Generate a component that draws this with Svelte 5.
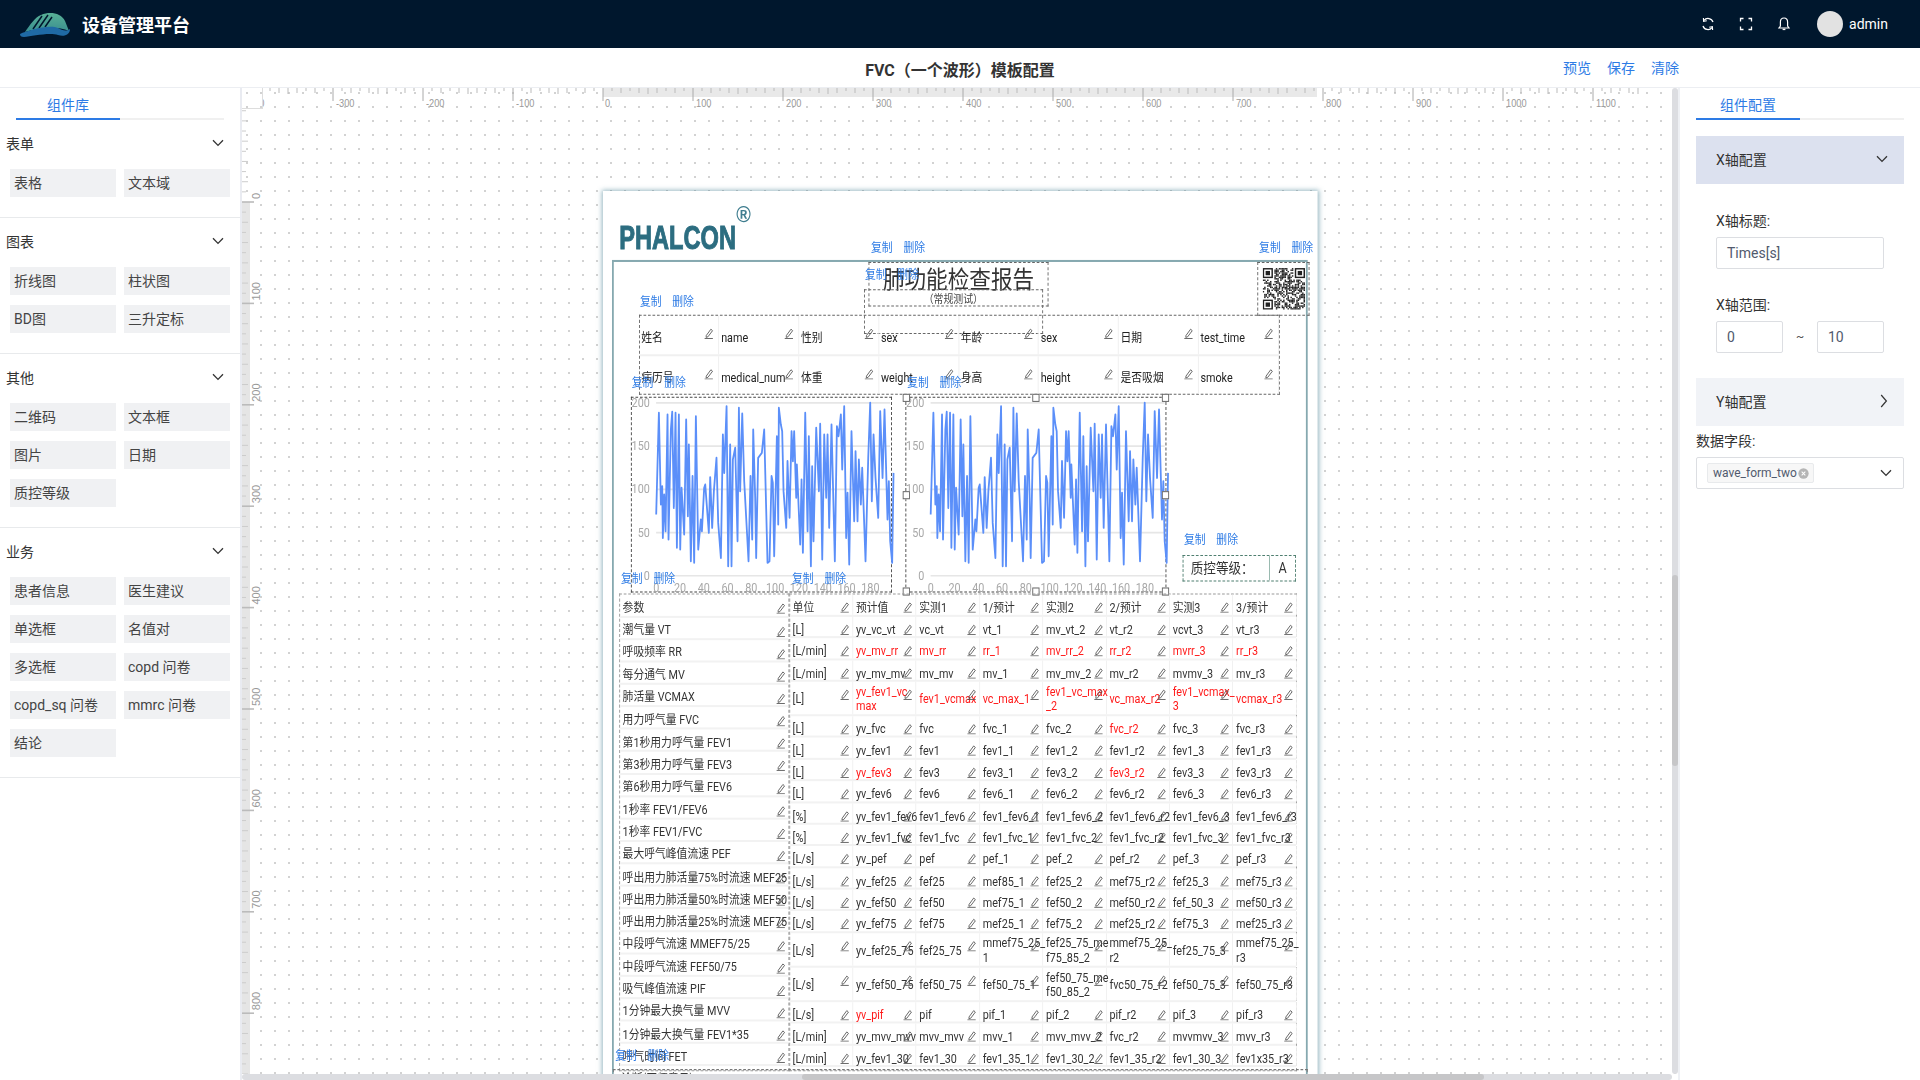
<script>
  const sections = [
    { name: '表单', items: ['表格', '文本域'] },
    { name: '图表', items: ['折线图', '柱状图', 'BD图', '三升定标'] },
    { name: '其他', items: ['二维码', '文本框', '图片', '日期', '质控等级'] },
    { name: '业务', items: ['患者信息', '医生建议', '单选框', '名值对', '多选框', 'copd 问卷', 'copd_sq 问卷', 'mmrc 问卷', '结论'] }
  ];

  // ruler
  const hTicks = [];
  for (let i = -40; i <= 115; i++) {
    const x = 603 - 263 + i * 9;
    if (x < 0) continue;
    hTicks.push({ x, h: i % 10 === 0 ? 13 : i % 5 === 0 ? 6 : i % 2 === 0 ? 5 : 3, long: i % 10 === 0 });
  }
  const hLabels = [];
  for (let n = -400; n <= 1100; n += 100) hLabels.push({ n, x: 340 + n * 0.9 + (n === 0 ? 2 : 3) });
  const vTicks = [];
  for (let i = -9; i <= 86; i++) {
    const y = 202 - 88 + i * 10.14;
    vTicks.push({ y, w: i % 10 === 0 ? 12 : i % 2 === 0 ? 6 : 4, long: i % 10 === 0 });
  }
  const vLabels = [0, 100, 200, 300, 400, 500, 600, 700, 800].map((n) => ({ n, y: 202 - 88 + n * 1.014 - 3 }));

  // chart
  const trace = [18,350,26,45,32,320,36,265,38,420,42,290,46,400,52,50,55,425,62,95,66,42,71,330,76,45,80,450,86,50,90,455,94,270,102,410,108,65,113,355,116,140,122,490,127,235,132,495,137,55,144,455,152,365,155,400,162,270,165,260,176,405,180,238,186,390,191,280,199,180,204,375,212,480,218,110,222,225,229,25,234,505,240,140,244,505,248,185,255,150,262,430,266,30,270,280,276,47,282,250,295,490,301,235,306,425,309,95,315,300,318,480,324,180,335,165,342,95,352,495,358,490,364,235,368,255,372,475,380,115,384,380,386,30,392,80,396,100,400,280,408,390,412,190,418,360,424,100,428,190,432,100,438,300,440,200,450,440,454,245,458,465,465,45,472,400,476,115,482,505,486,205,490,430,498,90,506,280,510,78,516,485,522,110,528,300,532,110,537,390,544,80,554,490,560,85,565,115,572,50,576,215,582,25,588,420,592,285,597,500,604,100,612,370,616,160,622,370,626,185,632,320,636,210,646,490,654,180,660,15,665,310,670,110,676,240,684,360,690,40,697,240,703,35,712,365,716,250,720,430,726,495,730,225];
  let pts = [];
  for (let i = 0; i < trace.length; i += 2) {
    const X = 650 + trace[i] / 3;
    const Y = 398 + trace[i + 1] / 3;
    pts.push(((X - 630.7) / 0.9).toFixed(1) + ',' + ((Y - 397) / 1.014).toFixed(1));
  }
  const points = pts.join(' ');
  const yAxis = [200, 150, 100, 50, 0].map((n) => ({ n, y: 176.5 - n * 0.853 }));
  const xAxis = [0, 20, 40, 60, 80, 100, 120, 140, 160, 180].map((n) => ({ n, x: 28.1 + n * 1.322 }));
  const handles = [[0, 0], [50, 0], [100, 0], [0, 50], [100, 50], [0, 100], [50, 100], [100, 100]];

  // QR
  const qrN = 29;
  const qr = [];
  let seed = 20240;
  const rnd = () => ((seed = (seed * 9301 + 49297) % 233280) / 233280);
  const inFinder = (x, y, ox, oy) => x >= ox - 1 && x <= ox + 7 && y >= oy - 1 && y <= oy + 7;
  for (let y = 0; y < qrN; y++) for (let x = 0; x < qrN; x++) {
    const f = [[0, 0], [22, 0], [0, 22]].some(([a, b]) => inFinder(x, y, a, b));
    if (!f && rnd() > 0.46) qr.push([x, y]);
  }
  const finders = [[0, 0], [22, 0], [0, 22]];

  // info table
  const info = [
    ['姓名', 'name', '性别', 'sex', '年龄', 'sex', '日期', 'test_time'],
    ['病历号', 'medical_num', '体重', 'weight', '身高', 'height', '是否吸烟', 'smoke']
  ];

  const leftRows = ['参数', '潮气量 VT', '呼吸频率 RR', '每分通气 MV', '肺活量 VCMAX', '用力呼气量 FVC', '第1秒用力呼气量 FEV1', '第3秒用力呼气量 FEV3', '第6秒用力呼气量 FEV6', '1秒率 FEV1/FEV6', '1秒率 FEV1/FVC', '最大呼气峰值流速 PEF', '呼出用力肺活量75%时流速 MEF25', '呼出用力肺活量50%时流速 MEF50', '呼出用力肺活量25%时流速 MEF75', '中段呼气流速 MMEF75/25', '中段呼气流速 FEF50/75', '吸气峰值流速 PIF', '1分钟最大换气量 MVV', '1分钟最大换气量 FEV1*35', '呼气时间 FET'];

  const R = (s) => '!' + s;
  const rightRows = [
    ['单位', '预计值', '实测1', '1/预计', '实测2', '2/预计', '实测3', '3/预计'],
    ['[L]', 'yv_vc_vt', 'vc_vt', 'vt_1', 'mv_vt_2', 'vt_r2', 'vcvt_3', 'vt_r3'],
    ['[L/min]', R('yv_mv_rr'), R('mv_rr'), R('rr_1'), R('mv_rr_2'), R('rr_r2'), R('mvrr_3'), R('rr_r3')],
    ['[L/min]', 'yv_mv_mv', 'mv_mv', 'mv_1', 'mv_mv_2', 'mv_r2', 'mvmv_3', 'mv_r3'],
    ['[L]', R('yv_fev1_vc\nmax'), R('fev1_vcmax'), R('vc_max_1'), R('fev1_vc_max\n_2'), R('vc_max_r2'), R('fev1_vcmax_\n3'), R('vcmax_r3')],
    ['[L]', 'yv_fvc', 'fvc', 'fvc_1', 'fvc_2', R('fvc_r2'), 'fvc_3', 'fvc_r3'],
    ['[L]', 'yv_fev1', 'fev1', 'fev1_1', 'fev1_2', 'fev1_r2', 'fev1_3', 'fev1_r3'],
    ['[L]', R('yv_fev3'), 'fev3', 'fev3_1', 'fev3_2', R('fev3_r2'), 'fev3_3', 'fev3_r3'],
    ['[L]', 'yv_fev6', 'fev6', 'fev6_1', 'fev6_2', 'fev6_r2', 'fev6_3', 'fev6_r3'],
    ['[%]', 'yv_fev1_fev6', 'fev1_fev6', 'fev1_fev6_1', 'fev1_fev6_2', 'fev1_fev6_r2', 'fev1_fev6_3', 'fev1_fev6_r3'],
    ['[%]', 'yv_fev1_fvc', 'fev1_fvc', 'fev1_fvc_1', 'fev1_fvc_2', 'fev1_fvc_r2', 'fev1_fvc_3', 'fev1_fvc_r3'],
    ['[L/s]', 'yv_pef', 'pef', 'pef_1', 'pef_2', 'pef_r2', 'pef_3', 'pef_r3'],
    ['[L/s]', 'yv_fef25', 'fef25', 'mef85_1', 'fef25_2', 'mef75_r2', 'fef25_3', 'mef75_r3'],
    ['[L/s]', 'yv_fef50', 'fef50', 'mef75_1', 'fef50_2', 'mef50_r2', 'fef_50_3', 'mef50_r3'],
    ['[L/s]', 'yv_fef75', 'fef75', 'mef25_1', 'fef75_2', 'mef25_r2', 'fef75_3', 'mef25_r3'],
    ['[L/s]', 'yv_fef25_75', 'fef25_75', 'mmef75_25_\n1', 'fef25_75_me\nf75_85_2', 'mmef75_25_\nr2', 'fef25_75_3', 'mmef75_25_\nr3'],
    ['[L/s]', 'yv_fef50_75', 'fef50_75', 'fef50_75_1', 'fef50_75_me\nf50_85_2', 'fvc50_75_r2', 'fef50_75_3', 'fef50_75_r3'],
    ['[L/s]', R('yv_pif'), 'pif', 'pif_1', 'pif_2', 'pif_r2', 'pif_3', 'pif_r3'],
    ['[L/min]', 'yv_mvv_mvv', 'mvv_mvv', 'mvv_1', 'mvv_mvv_2', 'fvc_r2', 'mvvmvv_3', 'mvv_r3'],
    ['[L/min]', 'yv_fev1_30', 'fev1_30', 'fev1_35_1', 'fev1_30_2', 'fev1_35_r2', 'fev1_30_3', 'fev1x35_r3']
  ];
  const isDouble = (r) => r.some((c) => c.includes('\n'));

  const actions = [
    [297.8, 48], [291, 75], [729, 48], [41, 100.5], [32, 181.3], [338, 181.3], [645.5, 336], [20, 374.6], [210, 374.6], [13.5, 845]
  ];
</script>

{#snippet pen()}
  <svg class="pen" viewBox="0 0 12 12" width="11" height="11" aria-hidden="true">
    <path d="M3 8.2 8.6 1.4 10.6 3 5 9.6 2.8 10.2Z" fill="none" stroke="#555" stroke-width="1" />
    <path d="M1 11.4H11" stroke="#555" stroke-width="1" />
  </svg>
{/snippet}

{#snippet chevron(cls)}
  <svg class={cls} viewBox="0 0 12 8" width="12" height="8" aria-hidden="true"><path d="M1 1.2 6 6.4 11 1.2" fill="none" stroke="#333" stroke-width="1.3" /></svg>
{/snippet}

{#snippet tabs(label)}
  <div class="tabs"><div class="tab">{label}</div></div>
{/snippet}

{#snippet chart(selected)}
  <svg class="plot" viewBox="0 0 290 193" width="290" height="193" aria-hidden="true">
    {#each yAxis as t}
      <line x1="28" x2="288" y1={t.y} y2={t.y} stroke="#e6e6e6" stroke-width="1.6" />
      <text class="axis" x="21" y={t.y + 4} text-anchor="end">{t.n}</text>
    {/each}
    {#each xAxis as t}
      <text class="axis" x={t.x} y="192" text-anchor="middle">{t.n}</text>
    {/each}
    <polyline {points} fill="none" stroke="#5b8ff9" stroke-width="2" stroke-linejoin="round" />
  </svg>
  {#if selected}
    {#each handles as h}
      <span class="handle" style="left:{h[0]}%;top:{h[1]}%"></span>
    {/each}
  {/if}
{/snippet}

<div class="page">
  <header class="topbar">
    <div class="brand">
      <svg class="logo" viewBox="0 0 50 25" width="50" height="25" aria-hidden="true">
        <defs>
          <linearGradient id="lg" x1="0" y1="0" x2="0" y2="1"><stop offset="0" stop-color="#58b096" /><stop offset="1" stop-color="#3a8f90" /></linearGradient>
        </defs>
        <path d="M5 20C10 13 15 5 21 3 30-1 41 1 45 9L49 19C38 14 20 15 5 20Z" fill="url(#lg)" />
        <path d="M13 17 22 4M19 16 28 3M25 15 32 5" stroke="#00172d" stroke-width="1.5" fill="none" />
        <path d="M0 22C8 18 30 12 38 16 42 18 46 20 50 17 50 23 44 25 38 23 30 20 12 24 4 25 1 25 0 24 0 22Z" fill="#1f6aa5" />
      </svg>
      <span class="brand-name">设备管理平台</span>
    </div>
    <div class="top-right">
      <svg viewBox="0 0 14 14" width="14" height="14" aria-hidden="true"><path d="M12 5A5.2 5.2 0 0 0 3 3.4M2 9A5.2 5.2 0 0 0 11 10.6" fill="none" stroke="#fff" stroke-width="1.3" /><path d="M2.4 1 2.6 4.4 5.8 3.8M11.6 13 11.4 9.6 8.2 10.2" fill="none" stroke="#fff" stroke-width="1.1" /></svg>
      <svg viewBox="0 0 14 14" width="14" height="14" aria-hidden="true"><path d="M1.5 4.5V1.5H4.5M9.5 1.5H12.5V4.5M12.5 9.5V12.5H9.5M4.5 12.5H1.5V9.5" fill="none" stroke="#fff" stroke-width="1.3" /></svg>
      <svg viewBox="0 0 14 14" width="14" height="14" aria-hidden="true"><path d="M7 1C4.6 1 3.4 3 3.4 5V9L2 11H12L10.6 9V5C10.6 3 9.4 1 7 1Z" fill="none" stroke="#fff" stroke-width="1.2" /><path d="M5.6 12.4H8.4" stroke="#fff" stroke-width="1.4" /></svg>
      <div class="user"><span class="avatar"></span><span class="uname">admin</span></div>
    </div>
  </header>

  <div class="toolbar">
    <span></span>
    <div class="page-title">FVC（一个波形）模板配置</div>
    <div class="links"><span>预览</span><span>保存</span><span>清除</span></div>
  </div>

  <div class="main">
    <aside class="left">
      {@render tabs('组件库')}
      {#each sections as s}
        <section class="group">
          <div class="group-head"><span>{s.name}</span>{@render chevron('chev')}</div>
          <div class="grid">
            {#each s.items as it}<div class="comp">{it}</div>{/each}
          </div>
        </section>
      {/each}
    </aside>

    <div class="canvas">
      <div class="paper">
        <div class="logo-text">PHALCON</div>
        <div class="reg">®</div>
        <div class="frame"></div>

        <div class="box title-box"><div class="report-title">肺功能检查报告</div></div>
        <div class="box sub-box"><div class="report-sub">（常规测试）</div></div>
        <div class="box qr-box">
          <svg class="qr" viewBox="0 0 29 29" preserveAspectRatio="none" aria-hidden="true">
            {#each qr as m}<rect x={m[0]} y={m[1]} width="1" height="1" fill="#222" />{/each}
            {#each finders as f}
              <rect x={f[0]} y={f[1]} width="7" height="7" fill="#222" />
              <rect x={f[0] + 1} y={f[1] + 1} width="5" height="5" fill="#fff" />
              <rect x={f[0] + 2} y={f[1] + 2} width="3" height="3" fill="#222" />
            {/each}
          </svg>
        </div>

        <div class="box info">
          {#each info as row}
            <div class="info-row">
              {#each row as c}
                <div class="info-cell"><span>{c}</span>{@render pen()}</div>
              {/each}
            </div>
          {/each}
        </div>

        <div class="box chart c1">{@render chart(false)}</div>
        <div class="box chart c2">{@render chart(true)}</div>

        <div class="quality"><span class="q-label">质控等级：</span><span class="q-val">A</span></div>

        <div class="box tbl-left">
          {#each leftRows as l}
            <div class="l-row"><span>{l}</span>{@render pen()}</div>
          {/each}
        </div>

        <div class="box tbl-right">
          {#each rightRows as r}
            <div class="r-row" class:double={isDouble(r)}>
              {#each r as c}
                <div class="r-cell" class:red={c.startsWith('!')}><span>{c.replace('!', '')}</span>{@render pen()}</div>
              {/each}
            </div>
          {/each}
        </div>

        <div class="box advice"><span>诊断(医师意见)</span></div>

        {#each actions as a}
          <div class="actions" style="left:{a[0]}px;top:{a[1]}px"><span>复制</span><span>删除</span></div>
        {/each}
      </div>

      <svg class="ruler-h" width="1409" height="22" aria-hidden="true">
        <rect x="340" y="0" width="714" height="9" fill="#e9e9e9" />
        {#each hTicks as t}
          <line x1={t.x} x2={t.x} y1="0" y2={t.h} stroke={t.long ? '#aaa' : '#bbb'} stroke-width="1" />
        {/each}
        {#each hLabels as l}
          <text class="rl" transform="translate({l.x},19) scale(.84,1)">{l.n}</text>
        {/each}
      </svg>
      <svg class="ruler-v" width="22" height="986" aria-hidden="true">
        <rect x="0" y="114" width="8" height="872" fill="#e5e5e5" />
        {#each vTicks as t}
          {#if t.y > 21}
            <line x1="0" x2={t.w} y1={t.y} y2={t.y} stroke={t.long ? '#bbb' : '#ccc'} stroke-width={t.long ? 1.6 : 1} />
          {/if}
        {/each}
        {#each vLabels as l}
          <text class="rl" transform="translate(18,{l.y}) rotate(-90)">{l.n}</text>
        {/each}
      </svg>
      <div class="corner"></div>

      <div class="sb-v"><span></span></div>
      <div class="sb-h"><span></span></div>
    </div>

    <aside class="right">
      {@render tabs('组件配置')}
      <div class="coll active"><span>X轴配置</span>{@render chevron('chev-sm')}</div>
      <div class="coll-body">
        <div class="lab">X轴标题:</div>
        <div class="input">Times[s]</div>
        <div class="lab second">X轴范围:</div>
        <div class="range">
          <div class="input">0</div>
          <span class="tilde">~</span>
          <div class="input">10</div>
        </div>
      </div>
      <div class="coll">
        <span>Y轴配置</span>
        <svg viewBox="0 0 8 14" width="8" height="14" aria-hidden="true"><path d="M1.2 1 6.4 7 1.2 13" fill="none" stroke="#333" stroke-width="1.2" /></svg>
      </div>
      <div class="field-lab">数据字段:</div>
      <div class="select">
        <span class="tag">wave_form_two
          <svg viewBox="0 0 12 12" width="11" height="11" aria-hidden="true"><circle cx="6" cy="6" r="5.6" fill="#b5b5b5" /><path d="M4 4 8 8M8 4 4 8" stroke="#fff" stroke-width="1.1" /></svg>
        </span>
        {@render chevron('chev-sel')}
      </div>
    </aside>
  </div>
</div>

<style>
  :global(body) { margin: 0; background: #fff; }
  .page {
    width: 1920px; height: 1080px; overflow: hidden; display: flex; flex-direction: column;
    font-family: Roboto, "Noto Sans CJK SC", sans-serif; color: #4a4f5c; font-size: 14px;
  }
  .topbar {
    height: 48px; flex: none; background: #00172d; display: flex; align-items: center;
    justify-content: space-between; padding: 0 32px 0 20px; color: #fff;
  }
  .brand { display: flex; align-items: center; gap: 12px; }
  .logo { display: block; }
  .brand-name { font-size: 18px; font-weight: 700; }
  .top-right { display: flex; align-items: center; gap: 24px; }
  .top-right > svg { display: block; }
  .user { display: flex; align-items: center; gap: 6px; margin-left: 2px; }
  .avatar { width: 26px; height: 26px; border-radius: 50%; background: #e2e2e2; }
  .uname { font-size: 14px; }

  .toolbar {
    height: 40px; flex: none; box-sizing: border-box; display: grid; grid-template-columns: 1fr auto 1fr;
    align-items: center; border-bottom: 1px solid #eceef2;
  }
  .page-title { font-size: 16px; font-weight: 700; color: #333; padding-top: 2px; }
  .links { display: flex; gap: 16px; justify-content: flex-end; padding: 0 241px 2px 0; color: #2d7be5; font-size: 14px; }

  .main { flex: 1; display: flex; min-height: 0; }
  .left { width: 240px; flex: none; overflow: hidden; }
  .right { width: 240px; flex: none; box-sizing: border-box; padding: 0 16px; }

  .tabs { height: 32px; box-sizing: border-box; border-bottom: 2px solid #f0f0f0; margin: 0 16px; }
  .right .tabs { margin: 0; }
  .tab {
    width: 104px; height: 32px; box-sizing: border-box; border-bottom: 2px solid #2d7be5; color: #2d7be5;
    text-align: center; font-size: 14px; line-height: 34px;
  }
  .group { border-bottom: 1px solid #e8eaec; padding-bottom: 20px; }
  .group-head { height: 49px; box-sizing: border-box; padding: 0 16px 4px 6px; display: flex; align-items: center; justify-content: space-between; color: #333; }
  .chev { margin-right: 0; }
  .grid { display: grid; grid-template-columns: 106px 106px; gap: 10px 8px; padding: 0 10px; }
  .comp { height: 28px; background: #f0f1f3; line-height: 28px; padding-left: 4px; color: #444; white-space: nowrap; }

  .canvas {
    flex: 1; position: relative; overflow: hidden; box-sizing: border-box;
    border-left: 2px solid #e9ebf1; border-right: 2px solid #eef0f4;
    background-color: #fff;
    background-image: radial-gradient(circle, #d2d2d2 0.9px, transparent 1.2px);
    background-size: 14px 14px;
    background-position: -2px -2px;
  }
  .ruler-h { position: absolute; left: 21px; top: 0; display: block; }
  .ruler-v { position: absolute; left: 0; top: 0; display: block; }
  .rl { font: 11px "Liberation Sans", sans-serif; fill: #999; }
  .corner { position: absolute; left: 0; top: 0; width: 20px; height: 20px; border-right: 1px solid #ddd; border-bottom: 1px solid #ddd; }
  .sb-v { position: absolute; right: 0; top: 0; bottom: 6px; width: 6px; background: #dcdde1; border-radius: 3px; }
  .sb-v span { position: absolute; left: 0; right: 0; top: 487px; height: 191px; background: #c6c6c8; border-radius: 3px; }
  .sb-h { position: absolute; left: 0; right: 6px; bottom: 0; height: 6px; background: #dcdde1; border-radius: 3px; }
  .sb-h span { position: absolute; top: 0; bottom: 0; left: 560px; width: 682px; background: #c6c6c8; border-radius: 3px; }

  .paper {
    position: absolute; left: 361px; top: 103px; width: 794px; height: 1123px; background: #fff;
    transform-origin: 0 0; transform: scale(0.9, 1.014);
    box-shadow: 0 0 5px 1px rgba(60, 120, 140, 0.55);
    font-size: 12px; color: #3a3a3a; line-height: 14px;
  }
  .logo-text {
    position: absolute; left: 18px; top: 29px; font: 700 32px/34px "Liberation Sans", sans-serif; color: #2c6d80;
    transform-origin: 0 0; transform: scaleX(0.82); filter: blur(0.5px);
    -webkit-text-stroke: 1px #2c6d80;
  }
  .reg { position: absolute; left: 148px; top: 12px; font: 700 22px/24px "Liberation Sans", sans-serif; color: #3f7d8f; filter: blur(0.4px); }
  .frame { position: absolute; left: 10px; top: 68px; width: 773px; height: 1040px; box-sizing: border-box; border: 2px solid #86a9b0; }
  .box { position: absolute; box-sizing: border-box; border: 1px dashed #666; }

  .title-box { left: 295px; top: 70px; width: 200px; height: 44px; }
  .report-title { font-size: 24px; line-height: 34px; text-align: center; color: #333; }
  .sub-box { left: 289.5px; top: 97px; width: 199.5px; height: 44px; }
  .report-sub { font-size: 11px; line-height: 18px; text-align: center; color: #444; }
  .qr-box { left: 727px; top: 70px; width: 58px; height: 53px; }
  .qr { position: absolute; left: 5px; top: 5px; width: 47px; height: 41px; filter: blur(0.25px); }

  .info { left: 39.5px; top: 122px; width: 712px; height: 79px; display: flex; flex-direction: column; }
  .info-row { flex: 1; display: flex; border-bottom: 2px solid #f0f0f0; }
  .info-row:last-child { border-bottom: 0; }
  .info-cell { flex: 1; position: relative; display: flex; align-items: center; padding: 6px 0 0 2px; border-right: 1px solid #eee; white-space: nowrap; color: #222; }
  .info-cell .pen { position: absolute; right: 5px; top: 12px; }

  .chart { border-color: #444; }
  .c1 { left: 30.8px; top: 203.2px; width: 290px; height: 193.3px; }
  .c2 { left: 336.3px; top: 203.2px; width: 290px; height: 193.3px; }
  .plot { position: absolute; left: -1px; top: -1px; overflow: visible; display: block; }
  .axis { font: 12px Roboto, sans-serif; fill: #a8a8a8; }
  .handle {
    position: absolute; width: 8px; height: 8px; margin: -4px 0 0 -4px; box-sizing: border-box;
    background: #fff; border: 1px solid #666;
  }

  .quality {
    position: absolute; left: 644px; top: 359px; width: 126px; height: 25.6px; box-sizing: border-box;
    border: 1px dashed #4f7f70; display: flex; align-items: center; color: #333; font-size: 14px;
  }
  .q-label { width: 96px; padding-left: 8px; box-sizing: border-box; border-right: 1px solid #8fb3a8; height: 100%; line-height: 24px; white-space: nowrap; }
  .q-val { flex: 1; text-align: center; }

  .tbl-left { left: 17.8px; top: 397.4px; width: 189px; height: 471px; border-color: #999; }
  .l-row {
    height: 22.15px; box-sizing: border-box; position: relative; padding: 4.5px 0 0 3px; line-height: 16px;
    border-bottom: 2px solid #f2f2f2; white-space: nowrap; color: #333;
  }
  .l-row .pen { position: absolute; right: 3px; top: 8px; }

  .tbl-right { left: 206.7px; top: 397.4px; width: 564.4px; height: 471px; border-color: #999; }
  .r-row { height: 21.4px; display: grid; grid-template-columns: repeat(8, 70.4px); box-sizing: border-box; border-bottom: 2px solid #f2f2f2; }
  .r-row.double { height: 34px; }
  .r-cell {
    position: relative; display: flex; align-items: center; padding: 6px 0 0 3px; border-right: 1px solid #f0f0f0;
    white-space: pre; color: #333;
  }
  .r-row.double .r-cell { padding-top: 2px; }
  .r-cell.red { color: #ff1a1a; }
  .r-cell .pen { position: absolute; right: 3px; top: 7px; }

  .advice { left: 11px; top: 866px; width: 772px; height: 100px; border-color: #777; padding: 2px 0 0 8px; }

  .actions { position: absolute; display: flex; gap: 12px; color: #2d7be5; font-size: 12px; line-height: 16px; white-space: nowrap; }

  .pen { display: block; }

  .coll {
    height: 48px; margin-top: 16px; box-sizing: border-box; background: #f1f3f7; display: flex; align-items: center;
    justify-content: space-between; padding: 0 16px 2px 20px; color: #333; font-size: 14px;
  }
  .coll.active { background: #dce1ef; }
  .coll + .field-lab { margin-top: 7px; }
  .coll-body { padding: 29px 20px 25px; }
  .coll-body + .coll { margin-top: 0; }
  .lab { line-height: 16px; height: 16px; margin-bottom: 8px; color: #333; }
  .lab.second { margin-top: 28px; }
  .input {
    height: 32px; box-sizing: border-box; border: 1px solid #dcdee2; border-radius: 2px; line-height: 30px;
    padding-left: 10px; color: #515a6e; font-size: 14px;
  }
  .range { display: flex; align-items: center; }
  .range .input { width: 67px; flex: none; }
  .tilde { flex: 1; text-align: center; font-size: 12px; color: #555; }
  .field-lab { line-height: 16px; color: #333; margin-bottom: 8px; }
  .select {
    height: 32px; box-sizing: border-box; border: 1px solid #dcdee2; border-radius: 2px; position: relative;
    display: flex; align-items: center; justify-content: space-between; padding: 0 11px 0 10px;
  }
  .tag {
    height: 20px; width: 107px; box-sizing: border-box; background: #f7f7f7; border: 1px solid #e8eaec; border-radius: 2px;
    font-size: 12px; color: #515a6e; display: flex; align-items: center; justify-content: space-between; padding: 0 4px 0 5px; white-space: nowrap;
  }
</style>
